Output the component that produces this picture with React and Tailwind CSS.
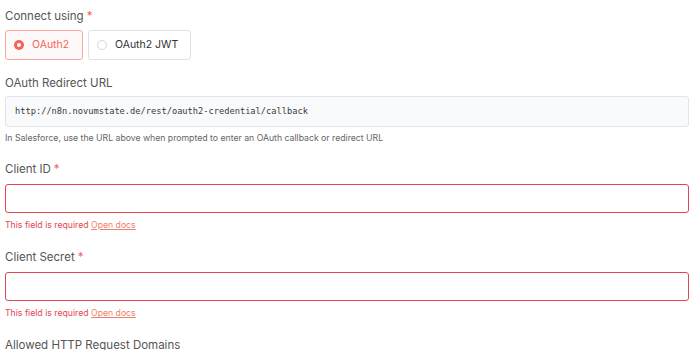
import React from 'react';

function Label({ children, required }) {
  return (
    <div className="text-[11.5px] text-[#555] leading-none">
      {children}
      {required && <span className="text-[#f0645a] ml-[3px]">*</span>}
    </div>
  );
}

function ErrorInput() {
  return (
    <>
      <div className="mt-[9px] h-[29px] rounded-[3px] border border-[#e4454f] bg-white" />
      <div className="mt-[8px] text-[8.7px] text-[#e4454f] leading-none">
        This field is required{' '}
        <a className="underline text-[#f0806b]">Open docs</a>
      </div>
    </>
  );
}

export default function App() {
  return (
    <div className="w-[690px] h-[350px] overflow-hidden bg-white pl-[5px] pr-[1px] pt-[11px]" style={{ fontFamily: 'Inter, "Noto Sans", sans-serif' }}>
      <Label required>Connect using</Label>
      <div className="mt-[7px] flex gap-[5px]">
        <div className="w-[78px] h-[30px] rounded-[3px] border border-[#f7a898] bg-[#fffaf9] flex items-center pl-[8px]">
          <span className="w-[10px] h-[10px] rounded-full bg-[#f0645a] flex items-center justify-center">
            <span className="w-[4px] h-[4px] rounded-full bg-white" />
          </span>
          <span className="ml-[8px] text-[10.5px] text-[#f0645a]">OAuth2</span>
        </div>
        <div className="w-[103px] h-[30px] rounded-[3px] border border-[#dfe1e8] bg-white flex items-center pl-[8px]">
          <span className="w-[10px] h-[10px] rounded-full border border-[#d4d6de] bg-white" />
          <span className="ml-[8px] text-[10.5px] text-[#333]">OAuth2 JWT</span>
        </div>
      </div>

      <div className="mt-[18px]">
        <Label>OAuth Redirect URL</Label>
      </div>
      <div className="mt-[7px] h-[31px] rounded-[3px] border border-[#e2e4ea] bg-[#f9fafc] flex items-center pl-[9px]">
        <span className="text-[8.7px] text-[#3a3a3a]" style={{ fontFamily: '"DejaVu Sans Mono", monospace' }}>
          http://n8n.novumstate.de/rest/oauth2-credential/callback
        </span>
      </div>
      <div className="mt-[7px] text-[8.7px] text-[#666] leading-none">
        In Salesforce, use the URL above when prompted to enter an OAuth callback or redirect URL
      </div>

      <div className="mt-[21px]">
        <Label required>Client ID</Label>
      </div>
      <ErrorInput />

      <div className="mt-[22px]">
        <Label required>Client Secret</Label>
      </div>
      <ErrorInput />

      <div className="mt-[22px]">
        <Label>Allowed HTTP Request Domains</Label>
      </div>
    </div>
  );
}
